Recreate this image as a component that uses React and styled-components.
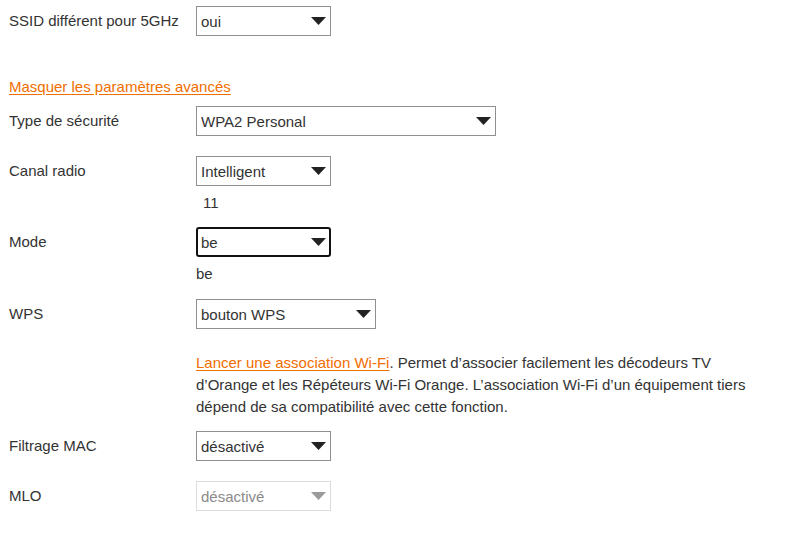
import React from 'react';
import styled, { createGlobalStyle, css } from 'styled-components';

const GlobalStyle = createGlobalStyle`
  html, body {
    margin: 0;
    padding: 0;
    background: #ffffff;
  }
  body {
    font-family: "Liberation Sans", Arial, sans-serif;
    font-size: 15px;
    color: #333333;
  }
`;

const Page = styled.div`
  padding: 6px 0 20px 9px;
  width: 789px;
  box-sizing: border-box;
`;

const Row = styled.div`
  display: grid;
  grid-template-columns: 187px 1fr;
  align-items: start;
  margin-top: ${(p) => p.$top ?? 20}px;
`;

const Label = styled.div`
  padding-top: 6px;
  line-height: 17px;
  white-space: nowrap;
`;

const Field = styled.div`
  display: flex;
  flex-direction: column;
  align-items: flex-start;
`;

const SelectWrap = styled.div`
  position: relative;
  width: ${(p) => p.$width}px;
  height: 30px;
`;

const NativeSelect = styled.select`
  appearance: none;
  -webkit-appearance: none;
  width: 100%;
  height: 100%;
  box-sizing: border-box;
  margin: 0;
  padding: 0 28px 0 4px;
  font-family: inherit;
  font-size: 15px;
  color: #333333;
  background: #ffffff;
  border: 1px solid #8f8f8f;
  border-radius: 0;
  outline: none;

  ${(p) =>
    p.$focused &&
    css`
      border: 2px solid #111111;
      border-radius: 3px;
      padding-left: 3px;
    `}

  &:disabled {
    color: #8a8a8a;
    border-color: #dcdcdc;
    opacity: 1;
  }
`;

const Arrow = styled.svg`
  position: absolute;
  right: 5px;
  top: 50%;
  margin-top: -4px;
  width: 15px;
  height: 8px;
  pointer-events: none;
  fill: ${(p) => (p.$disabled ? '#9a9a9a' : '#222222')};
`;

const SubValue = styled.div`
  margin-top: 8px;
  line-height: 17px;
  padding-left: ${(p) => p.$indent ?? 0}px;
`;

const AdvancedLink = styled.a`
  display: block;
  margin-top: 42px;
  line-height: 17px;
  color: #f16e00;
  text-decoration: underline;
  text-underline-offset: 2px;
  cursor: pointer;
`;

const Description = styled.p`
  margin: 0;
  max-width: 565px;
  line-height: 22px;
`;

const InlineLink = styled.a`
  color: #f16e00;
  text-decoration: underline;
  text-underline-offset: 2px;
  cursor: pointer;
`;

function Select({ width, value, options, focused, disabled }) {
  return (
    <SelectWrap $width={width}>
      <NativeSelect defaultValue={value} $focused={focused} disabled={disabled}>
        {options.map((o) => (
          <option key={o}>{o}</option>
        ))}
      </NativeSelect>
      <Arrow viewBox="0 0 15 8" $disabled={disabled}>
        <polygon points="0,0 15,0 7.5,8" />
      </Arrow>
    </SelectWrap>
  );
}

export default function App() {
  return (
    <>
      <GlobalStyle />
      <Page>
        <Row $top={0}>
          <Label>SSID différent pour 5GHz</Label>
          <Field>
            <Select width={135} value="oui" options={['oui', 'non']} />
          </Field>
        </Row>

        <AdvancedLink>Masquer les paramètres avancés</AdvancedLink>

        <Row $top={11}>
          <Label>Type de sécurité</Label>
          <Field>
            <Select
              width={300}
              value="WPA2 Personal"
              options={['WPA2 Personal', 'WPA3 Personal', 'WPA2/WPA3 Personal']}
            />
          </Field>
        </Row>

        <Row>
          <Label>Canal radio</Label>
          <Field>
            <Select width={135} value="Intelligent" options={['Intelligent', '1', '6', '11']} />
            <SubValue $indent={7}>11</SubValue>
          </Field>
        </Row>

        <Row $top={16}>
          <Label>Mode</Label>
          <Field>
            <Select width={135} value="be" options={['be', 'ax', 'n']} focused />
            <SubValue>be</SubValue>
          </Field>
        </Row>

        <Row $top={17}>
          <Label>WPS</Label>
          <Field>
            <Select width={180} value="bouton WPS" options={['bouton WPS', 'code PIN', 'désactivé']} />
          </Field>
        </Row>

        <Row $top={23}>
          <div />
          <Description>
            <InlineLink>Lancer une association Wi-Fi</InlineLink>. Permet d’associer facilement les
            décodeurs TV d’Orange et les Répéteurs Wi-Fi Orange. L’association Wi-Fi d’un
            équipement tiers dépend de sa compatibilité avec cette fonction.
          </Description>
        </Row>

        <Row $top={13}>
          <Label>Filtrage MAC</Label>
          <Field>
            <Select width={135} value="désactivé" options={['désactivé', 'activé']} />
          </Field>
        </Row>

        <Row>
          <Label>MLO</Label>
          <Field>
            <Select width={135} value="désactivé" options={['désactivé', 'activé']} disabled />
          </Field>
        </Row>
      </Page>
    </>
  );
}
